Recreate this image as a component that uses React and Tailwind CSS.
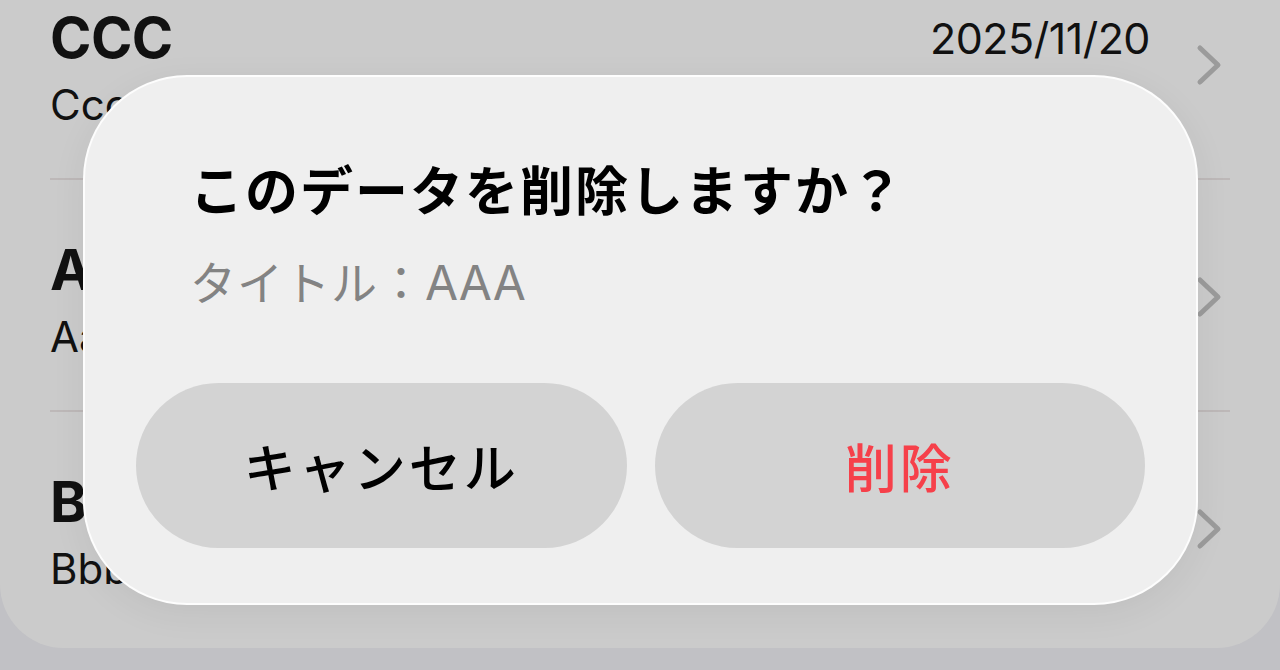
import React from "react";

const rows = [
  { title: "CCC", sub: "Ccc", date: "2025/11/20" },
  { title: "AAA", sub: "Aaa", date: "2025/11/20" },
  { title: "BBB", sub: "Bbb", date: "2025/11/20" },
];

function Chevron() {
  return (
    <svg width="26" height="42" viewBox="0 0 26 42" className="shrink-0">
      <polyline
        points="4,4 22,21 4,38"
        fill="none"
        stroke="#9b9b9b"
        strokeWidth="5"
        strokeLinecap="round"
        strokeLinejoin="round"
      />
    </svg>
  );
}

export default function App() {
  return (
    <div
      className="relative w-[1280px] h-[670px] overflow-hidden bg-[#c1c1c5]"
      style={{ fontFamily: 'Inter, "Noto Sans CJK JP", sans-serif' }}
    >
      {/* background list card */}
      <div className="mt-[-52px] w-full bg-[#cbcbcb] rounded-b-[64px] pb-[4px]">
        {rows.map((r, i) => (
          <div key={i} className="relative flex h-[232px] pl-[50px] pr-[58px]">
            <div className="flex-1 flex flex-col pt-[62px]">
              <div className="flex items-center justify-between h-[56px]">
                <span className="text-[56px] leading-[56px] font-bold text-[#111] tracking-[-0.5px]">
                  {r.title}
                </span>
                <span className="text-[43px] leading-[56px] text-[#111] tracking-[-0.5px]">
                  {r.date}
                </span>
              </div>
              <div className="mt-[17px] text-[42px] leading-[44px] text-[#111]">
                {r.sub}
              </div>
            </div>
            <div className="ml-[46px] self-center mt-[2px]">
              <Chevron />
            </div>
            {i < rows.length - 1 && (
              <div className="absolute left-[50px] right-[50px] bottom-0 h-[2px] bg-[#bdb8b8]" />
            )}
          </div>
        ))}
      </div>

      {/* dialog */}
      <div
        className="absolute left-[83px] top-[75px] w-[1115px] h-[530px] rounded-[104px] bg-[#efefef] border-2 border-white/90 shadow-[0_8px_36px_rgba(0,0,0,0.06)] flex flex-col pt-[79px] px-[51px] pb-[55px]"
        style={{ fontFamily: '"Noto Sans CJK JP", Inter, sans-serif' }}
      >
        <div className="ml-[54px] text-[53px] leading-[64px] font-bold text-black tracking-[2px]">
          このデータを削除しますか？
        </div>
        <div className="ml-[54px] mt-[32px] text-[46px] leading-[56px] text-[#838383] tracking-[1px]">
          タイトル：
          <span className="text-[48px] tracking-[0px]" style={{ fontFamily: 'Inter, "Noto Sans CJK JP", sans-serif' }}>
            AAA
          </span>
        </div>
        <div className="mt-auto flex gap-[28px]">
          <button className="flex-1 h-[165px] rounded-full bg-[#d3d3d3] flex items-center justify-center text-[52px] font-medium text-black tracking-[3px]">
            キャンセル
          </button>
          <button className="flex-1 h-[165px] rounded-full bg-[#d3d3d3] flex items-center justify-center text-[52px] font-medium text-[#f6404a] tracking-[3px]">
            削除
          </button>
        </div>
      </div>
    </div>
  );
}
